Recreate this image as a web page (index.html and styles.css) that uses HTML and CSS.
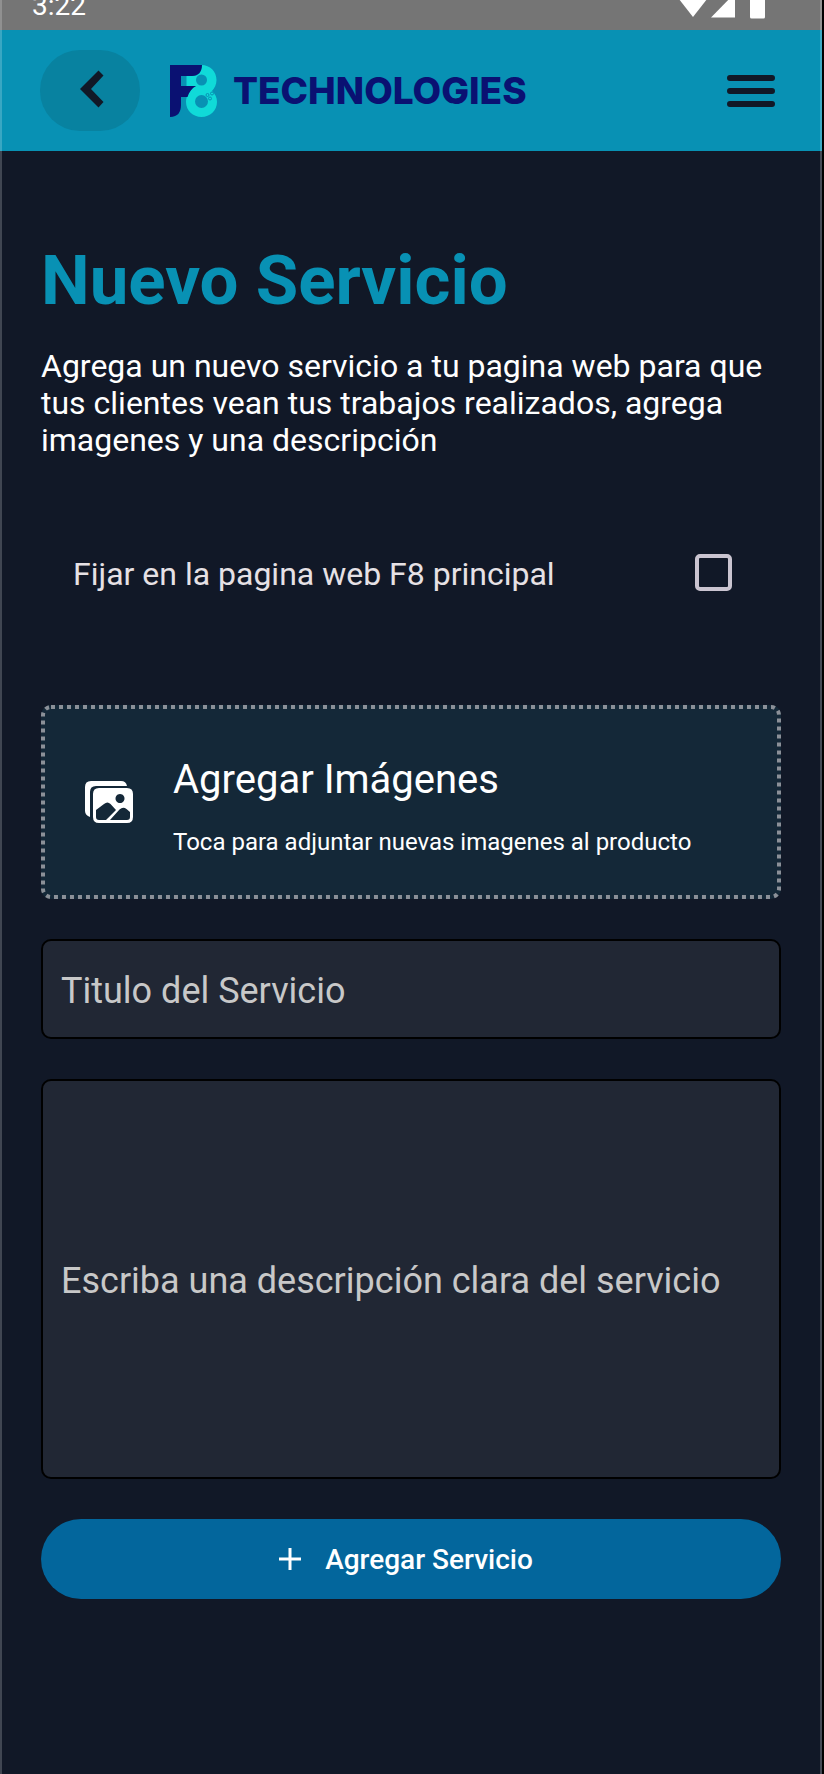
FILE: index.html
```html
<!DOCTYPE html>
<html lang="es">
<head>
<meta charset="utf-8">
<meta name="viewport" content="width=device-width, initial-scale=1">
<title>Nuevo Servicio</title>
<link rel="stylesheet" href="styles.css">
</head>
<body>
<div class="screen">
  <div class="status">
    <span class="clock">3:22</span>
    <svg class="signals" width="88" height="30" viewBox="0 0 88 30" aria-hidden="true">
      <path d="M-3 -6L15 17L33 -6z"/>
      <path d="M33 17.500H57V-7z"/>
      <path d="M72 -5H87V17Q87 18.500 85.500 18.500H73.500Q72 18.500 72 17z"/>
    </svg>
  </div>
  <header class="topbar">
    <button class="back" type="button" aria-label="Volver">
      <svg width="24" height="38" viewBox="0 0 24 38" aria-hidden="true"><path d="M18.500 0.500L23.500 5.500L11 19L23.500 32L18.500 37.500L0 19z"/></svg>
    </button>
    <div class="brand">
      <svg width="47" height="52" viewBox="0 0 47 52" aria-hidden="true">
        <path class="teal" d="M31.500 0C40 0 46.500 6.500 46.500 15C46.500 19.500 44.500 23.500 42 26C45 28.500 47 32.500 47 37C47 45.500 40 52 31.500 52C23 52 16 45.500 16 37C16 30 20.500 24 26 21H16.500V11H23C29 11 31.500 7 31.500 0z"/>
        <path class="navy" d="M0 0H32C32 7 28 11 22 11H11V21H26C22 23 19 27 17.500 32H11V40C11 47 8 52 0 52z"/>
        <circle class="hole" cx="31.500" cy="15" r="5.500"/>
        <circle class="hole" cx="31.500" cy="36.500" r="6.500"/>
        <g class="bubbles"><circle cx="37.500" cy="30" r="1.500"/><circle cx="42" cy="28.500" r="1.500"/><circle cx="40" cy="33.500" r="1.500"/></g>
      </svg>
      <span class="name">TECHNOLOGIES</span>
    </div>
    <button class="menu" type="button" aria-label="Menú">
      <svg width="48" height="32" viewBox="0 0 48 32" aria-hidden="true"><path d="M3 3H45M3 16H45M3 29H45"/></svg>
    </button>
  </header>
  <main class="content">
    <h1 class="title">Nuevo Servicio</h1>
    <p class="intro">Agrega un nuevo servicio a tu pagina web para que tus clientes vean tus trabajos realizados, agrega imagenes y una descripción</p>
    <label class="pin">
      <span>Fijar en la pagina web F8 principal</span>
      <input class="check" type="checkbox">
    </label>
    <form class="form">
      <button class="upload" type="button">
        <svg class="outline" aria-hidden="true"><rect x="2" y="2" rx="8"/></svg>
        <svg class="pictures" width="48" height="42" viewBox="0 0 48 42" aria-hidden="true">
          <path d="M5 36C2 35 0 33 0 30V6Q0 0 6 0H36Q41 0 42 5H11Q5 5 5 11z"/>
          <path fill-rule="evenodd" d="M14 7H42Q48 7 48 13V36Q48 42 42 42H14Q8 42 8 36V13Q8 7 14 7zM35 13a4.500 4.500 0 1 0 .01 0zM11 29V36Q11 39 14 39H21L31 29L25.500 23Q22.500 20 19 23zM25 39H42Q45 39 45 36V31L41.500 28Q38 25.500 34.500 28.500z"/>
        </svg>
        <span class="words">
          <span class="lead">Agregar Imágenes</span>
          <span class="hint">Toca para adjuntar nuevas imagenes al producto</span>
        </span>
      </button>
      <input class="field" type="text" aria-label="Titulo del Servicio" placeholder="Titulo del Servicio">
      <textarea class="field area" aria-label="Descripción" placeholder="Escriba una descripción clara del servicio"></textarea>
      <button class="submit" type="button">
        <svg width="22" height="22" viewBox="0 0 22 22" aria-hidden="true"><path d="M11 0V22M0 11H22"/></svg>
        <span>Agregar Servicio</span>
      </button>
    </form>
  </main>
  <div class="bezel"></div>
</div>
</body>
</html>
```
FILE: styles.css
```css
* { box-sizing: border-box; }
body {
  margin: 0;
  background: #111827;
  color: #fff;
  font-family: Roboto, sans-serif;
}
button, input, textarea { font: inherit; color: inherit; margin: 0; }
button { border: 0; padding: 0; cursor: pointer; }
svg { display: block; flex: none; }
.screen { position: relative; min-height: 100vh; padding-right: 2px; }
.bezel {
  position: absolute;
  inset: 0;
  border-left: 2px solid rgba(255, 255, 255, .2);
  border-right: 2px solid #000;
  pointer-events: none;
}
.bezel::after {
  content: "";
  position: absolute;
  inset: 0 0 0 auto;
  width: 2px;
  background: rgba(255, 255, 255, .22);
}
.status {
  display: flex;
  justify-content: space-between;
  align-items: flex-end;
  height: 30px;
  padding: 0 56px 0 32px;
  overflow: hidden;
  background: #757575;
}
.clock { font-size: 28px; line-height: 48px; }
.signals { fill: #fff; }
.topbar {
  display: flex;
  align-items: center;
  padding: 20px 47px 20px 40px;
  background: #0891b4;
}
.back {
  display: grid;
  place-items: center;
  width: 100px;
  height: 81px;
  padding: 0 0 3px 3px;
  border-radius: 40px;
  background: #0882a0;
}
.back svg { fill: #111827; }
.brand { display: flex; align-items: center; gap: 16px; margin-left: 30px; }
.teal { fill: #10dad8; }
.navy { fill: #0a1172; }
.hole { fill: #0891b4; }
.bubbles { fill: none; stroke: #0891b4; stroke-width: 1; }
.name {
  color: #0a1172;
  font-family: Inter, sans-serif;
  font-size: 37px;
  font-weight: 800;
  line-height: 44px;
}
.menu { margin-left: auto; background: none; }
.menu path { stroke: #111827; stroke-width: 6; stroke-linecap: round; }
.content { padding: 90px 41px 64px; }
.title { margin: 0; color: #0891b4; font-size: 69px; line-height: 80px; }
.intro { margin: 27px 0 0; font-size: 32px; line-height: 37px; }
.pin {
  display: flex;
  align-items: flex-start;
  justify-content: space-between;
  margin: 95px 0 111px;
  padding: 0 49px 0 32px;
  color: #e6e1e5;
  font-size: 32px;
  line-height: 40px;
}
.check {
  appearance: none;
  width: 37px;
  height: 37px;
  border: 4px solid #cac4d0;
  border-radius: 5px;
}
.form { display: flex; flex-direction: column; gap: 40px; }
.upload {
  position: relative;
  display: flex;
  align-items: center;
  gap: 40px;
  padding: 41px 44px;
  border-radius: 10px;
  background: #142838;
  text-align: left;
}
.outline { position: absolute; inset: 0; width: 100%; height: 100%; }
.outline rect {
  width: calc(100% - 4px);
  height: calc(100% - 4px);
  fill: none;
  stroke: #8b9098;
  stroke-width: 4;
  stroke-dasharray: 4 4;
}
.pictures { fill: #fff; }
.words { display: flex; flex-direction: column; gap: 22px; padding-top: 10px; }
.lead { font-size: 40px; line-height: 48px; }
.hint { font-size: 24px; line-height: 32px; }
.field {
  width: 100%;
  height: 100px;
  padding: 4px 18px 0;
  border: 2px solid #000;
  border-radius: 10px;
  background: #212734;
  font-size: 36px;
  line-height: 44px;
}
.field::placeholder { color: #c8c8c8; opacity: 1; }
.area { display: block; height: 400px; padding: 178px 18px; resize: none; overflow: hidden; }
.submit {
  display: flex;
  align-items: center;
  justify-content: center;
  gap: 24px;
  height: 80px;
  padding-right: 10px;
  border-radius: 40px;
  background: #03669c;
  font-size: 28px;
  font-weight: 500;
}
.submit path { stroke: #fff; stroke-width: 3; }
```
